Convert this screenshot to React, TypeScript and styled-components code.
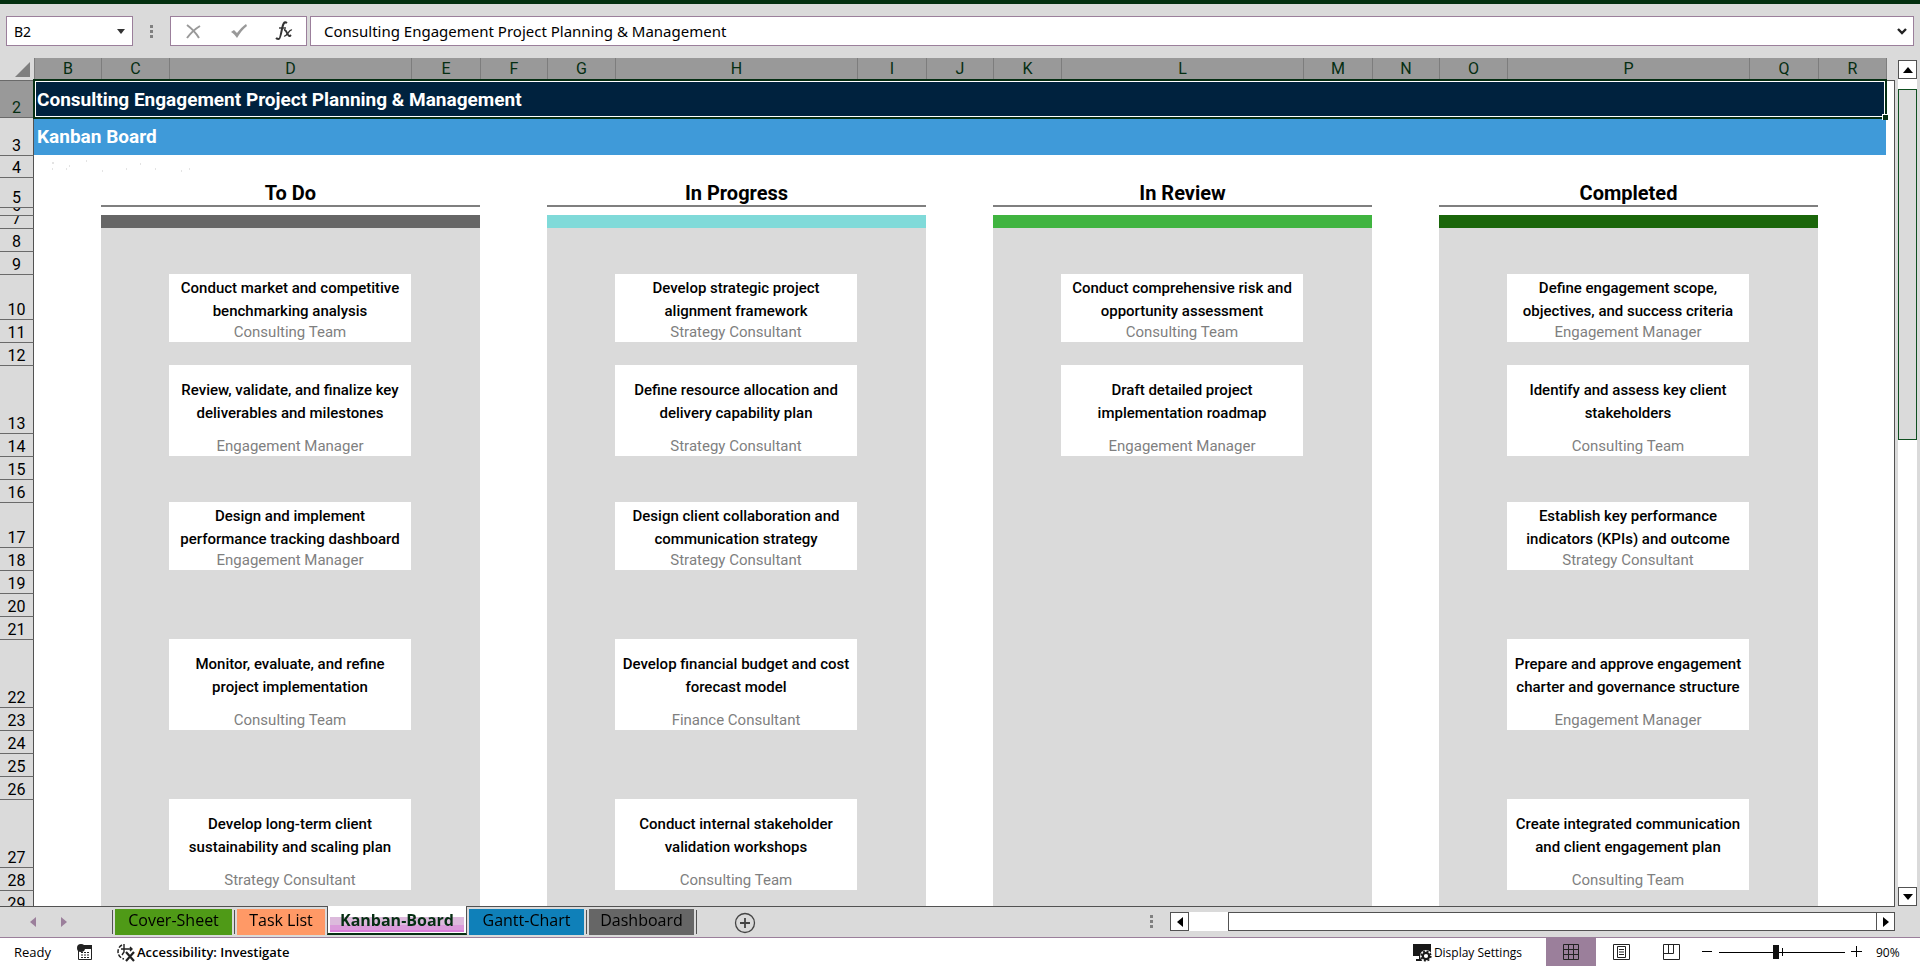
import React from 'react';
import styled, { createGlobalStyle } from 'styled-components';

const ink = '#052e12';
const chrome = '#dadada';
const mauve = '#9b7f9b';
const edge = '#525252';
const uiFont = '"Open Sans", "Noto Sans", sans-serif';
const cellFont = 'Roboto, "Noto Sans", sans-serif';

const GlobalStyle = createGlobalStyle`
  *, *::before, *::after { box-sizing: border-box; }
  body { margin: 0; background: ${chrome}; font-family: ${uiFont}; color: #000; }
  button, input { font: inherit; color: inherit; }
  button { margin: 0; padding: 0; border: 0; background: none; }
`;

const Window = styled.div`
  display: flex;
  flex-direction: column;
  height: 100vh;
  border-top: 4px solid #04300f;
`;

/* Formula bar */
const FormulaBar = styled.div`
  display: flex;
  align-items: center;
  padding: 12px 6px;
`;
const Field = styled.div<{ $grow?: boolean }>`
  display: flex;
  align-items: center;
  flex: ${(p) => (p.$grow ? '1' : '0 0 127px')};
  min-width: 0;
  height: 30px;
  padding: 0 4px 0 ${(p) => (p.$grow ? 13 : 7)}px;
  background: #fff;
  border: 1px solid ${mauve};
`;
const FieldInput = styled.input<{ $size: number }>`
  flex: 1;
  width: 100%;
  min-width: 0;
  padding: 0;
  border: 0;
  outline: 0;
  background: none;
  font-family: "Noto Sans", sans-serif;
  font-size: ${(p) => p.$size}px;
`;
const IconButton = styled.button`
  display: flex;
  align-items: center;
  justify-content: center;
  flex: none;
  width: 14px;
  height: 24px;
`;
const Grip = styled.span`
  display: flex;
  flex-direction: column;
  gap: 2px;
  width: 3px;
  margin: 0 17px;
`;
const GripDot = styled.i`
  height: 3px;
  background: #808080;
`;
const EntryTools = styled.div`
  display: flex;
  align-items: center;
  justify-content: space-around;
  width: 137px;
  height: 30px;
  margin-right: 3px;
  background: #fff;
  border: 1px solid ${mauve};
`;
const ToolButton = styled.button`
  display: flex;
  align-items: center;
  justify-content: center;
  width: 28px;
  height: 28px;
`;

/* Sheet */
const Workspace = styled.div`
  display: flex;
  flex: 1;
  min-height: 0;
`;
const Viewport = styled.div`
  flex: 1;
  min-width: 0;
  overflow: auto;
  scrollbar-width: none;
`;
const Sheet = styled.table`
  width: 100%;
  min-width: 1500px;
  table-layout: fixed;
  border-collapse: separate;
  border-spacing: 0;
  background: #fff;
  font-family: ${cellFont};
  td, th { padding: 0; }
`;
const Col = styled.col<{ $w?: number }>`
  width: ${(p) => (p.$w ? `${p.$w}px` : 'auto')};
`;
const Corner = styled.th`
  height: 22px;
  background: ${chrome};
  text-align: right;
  line-height: 0;
  svg { margin-right: 4px; }
`;
const ColumnHead = styled.th`
  height: 22px;
  background: #999;
  border-left: 1px solid #7d7d7d;
  color: ${ink};
  font-size: 16px;
  font-weight: 400;
  line-height: 22px;
`;
const HeadEnd = styled.th`
  background: ${chrome};
  border-left: 1px solid #7d7d7d;
`;
const RowHead = styled.th<{ $active: boolean }>`
  background: ${(p) => (p.$active ? '#999' : chrome)};
  border-top: 1px solid #6a6a6a;
  border-right: 1px solid ${edge};
  color: ${(p) => (p.$active ? ink : '#000')};
  font-size: 16px;
  font-weight: 400;
`;
const RowNumber = styled.div<{ $h: number }>`
  display: flex;
  align-items: flex-end;
  justify-content: center;
  height: ${(p) => p.$h - 1}px;
  overflow: hidden;
  line-height: 18px;
`;
const SheetEdge = styled.td<{ $first: boolean }>`
  border-right: 1px solid ${edge};
  border-top: ${(p) => (p.$first ? `1px solid ${edge}` : '0')};
`;
const BannerCell = styled.td<{ $bg: string }>`
  position: relative;
  background: ${(p) => p.$bg};
`;
const BannerText = styled.h1`
  margin: 0;
  padding: 2px 0 0 3px;
  color: #fff;
  font-size: 19px;
  font-weight: 700;
  line-height: 24px;
`;
const Selection = styled.span`
  position: absolute;
  z-index: 1;
  inset: -1px -1px -2px -1px;
  border: 2px solid ${ink};
  outline: 1px solid #fff;
  outline-offset: -3px;
  &::after {
    content: '';
    position: absolute;
    right: -3px;
    bottom: -3px;
    width: 6px;
    height: 6px;
    background: ${ink};
    border: solid #fff;
    border-width: 1px 0 0 1px;
  }
`;
const NoteCell = styled.td`
  line-height: 0;
  svg { margin-left: 17px; }
`;
const LaneTitleCell = styled.td`
  padding-top: 4px !important;
  border-bottom: 2px solid #7f7f7f;
  font-size: 20px;
  font-weight: 700;
  line-height: 24px;
  text-align: center;
`;
const LaneCell = styled.td<{ $bg?: string }>`
  background: ${(p) => p.$bg || chrome};
`;
const CardCell = styled.td`
  background: #fff;
  text-align: center;
  font-size: 15px;
`;
const CardTitle = styled.div<{ $h: number }>`
  display: flex;
  align-items: center;
  justify-content: center;
  height: ${(p) => p.$h}px;
  padding: 6px 4px 0;
  font-weight: 500;
  line-height: 23px;
`;
const CardOwner = styled.div`
  display: flex;
  align-items: flex-end;
  justify-content: center;
  height: 23px;
  color: #7f7f7f;
  line-height: 20px;
`;

/* Scroll bars */
const VScroll = styled.div`
  display: flex;
  flex-direction: column;
  width: 25px;
  padding: 2px 3px 0;
`;
const VTrack = styled.div`
  flex: 1;
  padding-top: 10px;
  background: #fff;
`;
const VThumb = styled.div`
  height: 44%;
  background: ${chrome};
  border: 1px solid #0f4f20;
`;
const ScrollButton = styled.button`
  display: flex;
  align-items: center;
  justify-content: center;
  flex: none;
  width: 19px;
  height: 19px;
  background: #fff;
  border: 1px solid ${edge};
`;
const HScroll = styled.div`
  display: flex;
  align-items: center;
  flex: 145;
  height: 19px;
`;
const HTrack = styled.div`
  flex: 1;
  height: 19px;
  padding-left: 39px;
  background: #fff;
`;
const HThumb = styled.div`
  height: 19px;
  border: solid ${edge};
  border-width: 1px 0 1px 1px;
`;

/* Tab strip */
const TabBar = styled.div`
  display: flex;
  align-items: center;
  height: 32px;
  padding-right: 25px;
  border-bottom: 1px solid ${mauve};
  background: linear-gradient(${edge}, ${edge}) 0 0 / calc(100% - 25px) 1px no-repeat;
`;
const TabSide = styled.div`
  display: flex;
  flex: 234;
  align-items: flex-start;
  height: 32px;
`;
const TabNav = styled.div`
  display: flex;
  align-items: center;
  gap: 17px;
  width: 112px;
  height: 32px;
  padding-left: 26px;
`;
const TabGrip = styled.div`
  display: flex;
  align-items: center;
  height: 32px;
`;
const TabList = styled.nav`
  display: flex;
  align-items: flex-start;
`;
const Tab = styled.a<{ $bg: string; $w: number }>`
  width: ${(p) => p.$w}px;
  height: 26px;
  margin: 3px 2px 0;
  background: ${(p) => p.$bg};
  color: #000;
  font-size: 16px;
  line-height: 22px;
  text-align: center;
  text-decoration: none;
`;
const ActiveTab = styled.a`
  width: 140px;
  height: 29px;
  padding: 0 2px;
  background: #fff;
  border: solid ${edge};
  border-width: 0 1px 2px;
  border-bottom-color: ${ink};
  color: ${ink};
  font-size: 16px;
  font-weight: 700;
  text-align: center;
  text-decoration: none;
`;
const ActiveTabLabel = styled.span`
  display: block;
  height: 26px;
  padding-top: 3px;
  line-height: 22px;
  background: linear-gradient(#fff 0 11px, #dcbadc 11px 19px, #da9ada 19px 24px, #d97ed9 24px);
`;
const TabDivider = styled.i`
  width: 1px;
  height: 24px;
  margin-top: 4px;
  background: ${edge};
`;
const AddTab = styled.button`
  width: 22px;
  height: 22px;
  margin: 6px 0 0 37px;
  line-height: 0;
`;

/* Status bar */
const StatusBar = styled.footer`
  display: flex;
  align-items: center;
  height: 28px;
  padding: 0 14px;
  background: #fff;
  font-size: 13px;
  white-space: nowrap;
`;
const StatusButton = styled.button<{ $bold?: boolean }>`
  display: flex;
  align-items: center;
  gap: 2px;
  font-size: ${(p) => (p.$bold ? 13 : 12)}px;
  font-weight: ${(p) => (p.$bold ? 600 : 400)};
`;
const StatusText = styled.span`
  width: 63px;
`;
const MacroButton = styled.button`
  width: 39px;
  text-align: left;
  line-height: 0;
`;
const Spacer = styled.div`
  flex: 1;
`;
const ViewButton = styled.button<{ $on?: boolean }>`
  display: flex;
  align-items: center;
  justify-content: center;
  width: 50px;
  height: 28px;
  background: ${(p) => (p.$on ? mauve : 'transparent')};
`;
const ViewGroup = styled.div`
  display: flex;
  margin: 0 6px 0 24px;
`;
const ZoomGroup = styled.div`
  display: flex;
  align-items: center;
  gap: 6px;
`;
const ZoomSlider = styled.input`
  appearance: none;
  width: 126px;
  height: 16px;
  margin: 0;
  background:
    linear-gradient(#000, #000) 50% 50% / 1px 8px no-repeat,
    linear-gradient(#000, #000) 0 50% / 100% 1px no-repeat;
  &::-webkit-slider-thumb {
    appearance: none;
    width: 6px;
    height: 14px;
    background: #111;
  }
`;
const ZoomValue = styled.span`
  margin-left: 8px;
  width: 30px;
  font-size: 12px;
`;

type Lane = { title: string; color: string; cards: ([string, string] | null)[] };
const lanes: Lane[] = [
  {
    title: 'To Do',
    color: '#666666',
    cards: [
      ['Conduct market and competitive benchmarking analysis', 'Consulting Team'],
      ['Review, validate, and finalize key deliverables and milestones', 'Engagement Manager'],
      ['Design and implement performance tracking dashboard', 'Engagement Manager'],
      ['Monitor, evaluate, and refine project implementation', 'Consulting Team'],
      ['Develop long-term client sustainability and scaling plan', 'Strategy Consultant'],
    ],
  },
  {
    title: 'In Progress',
    color: '#80dad9',
    cards: [
      ['Develop strategic project alignment framework', 'Strategy Consultant'],
      ['Define resource allocation and delivery capability plan', 'Strategy Consultant'],
      ['Design client collaboration and communication strategy', 'Strategy Consultant'],
      ['Develop financial budget and cost forecast model', 'Finance Consultant'],
      ['Conduct internal stakeholder validation workshops', 'Consulting Team'],
    ],
  },
  {
    title: 'In Review',
    color: '#40b440',
    cards: [
      ['Conduct comprehensive risk and opportunity assessment', 'Consulting Team'],
      ['Draft detailed project implementation roadmap', 'Engagement Manager'],
      null,
      null,
      null,
    ],
  },
  {
    title: 'Completed',
    color: '#1a660a',
    cards: [
      ['Define engagement scope, objectives, and success criteria', 'Engagement Manager'],
      ['Identify and assess key client stakeholders', 'Consulting Team'],
      ['Establish key performance indicators (KPIs) and outcome', 'Strategy Consultant'],
      ['Prepare and approve engagement charter and governance structure', 'Engagement Manager'],
      ['Create integrated communication and client engagement plan', 'Consulting Team'],
    ],
  },
];

const columns: [string, number?][] = [
  ['B', 67], ['C', 68], ['D'], ['E', 69], ['F', 67], ['G', 68], ['H'], ['I', 69], ['J', 67],
  ['K', 68], ['L'], ['M', 69], ['N', 67], ['O', 68], ['P'], ['Q', 69], ['R', 68],
];

const rowHeights: Record<number, number> = {
  2: 37, 3: 38, 4: 22, 5: 30, 6: 8, 7: 13, 10: 45, 13: 68, 17: 45, 22: 68, 27: 68,
};
const rowNumbers = Array.from({ length: 28 }, (_, i) => i + 2);
const cardRows = [10, 13, 17, 22, 27];

const Dots = () => (
  <Grip>
    <GripDot />
    <GripDot />
    <GripDot />
  </Grip>
);

const Arrow = ({ d, w = 12, h = 12, fill = '#000' }: { d: string; w?: number; h?: number; fill?: string }) => (
  <svg width={w} height={h} viewBox={`0 0 ${w} ${h}`} aria-hidden="true">
    <path d={d} fill={fill} />
  </svg>
);

function LaneCells({ lane, row, h }: { lane: Lane; row: number; h: number }) {
  if (row === 5) return <LaneTitleCell colSpan={3}>{lane.title}</LaneTitleCell>;
  if (row === 6) return <td colSpan={3} />;
  if (row === 7) return <LaneCell colSpan={3} $bg={lane.color} />;
  const titleIndex = cardRows.indexOf(row);
  const ownerIndex = cardRows.indexOf(row - 1);
  const card = lane.cards[Math.max(titleIndex, ownerIndex)];
  if (!card) return <LaneCell colSpan={3} />;
  return (
    <>
      <LaneCell />
      <CardCell>
        {titleIndex >= 0 ? <CardTitle $h={h}>{card[0]}</CardTitle> : <CardOwner>{card[1]}</CardOwner>}
      </CardCell>
      <LaneCell />
    </>
  );
}

function RowCells({ row, h }: { row: number; h: number }) {
  if (row === 2)
    return (
      <BannerCell colSpan={17} $bg="#00223e">
        <BannerText>Consulting Engagement Project Planning &amp; Management</BannerText>
        <Selection />
      </BannerCell>
    );
  if (row === 3)
    return (
      <BannerCell colSpan={17} $bg="#3f9ad9">
        <BannerText as="h2">Kanban Board</BannerText>
      </BannerCell>
    );
  if (row === 4)
    return (
      <NoteCell colSpan={17}>
        <svg width="142" height="12" viewBox="0 0 142 12" aria-hidden="true">
          <path
            d="M1 3h2M1 9h1M15 9h1M18 6h1M35 1h1M51 11h1M75 9h1M89 4h1M104 9h1M130 11h1M138 9h1"
            stroke="#c9c9c9"
          />
        </svg>
      </NoteCell>
    );
  return (
    <>
      {lanes.map((lane) => (
        <React.Fragment key={lane.title}>
          <td />
          <LaneCells lane={lane} row={row} h={h} />
        </React.Fragment>
      ))}
      <td />
    </>
  );
}

export default function App() {
  return (
    <Window>
      <GlobalStyle />
      <FormulaBar>
        <Field>
          <FieldInput $size={14} aria-label="Name box" defaultValue="B2" />
          <IconButton aria-label="Names">
            <Arrow w={8} h={5} d="M0 0h8L4 5z" fill="#333" />
          </IconButton>
        </Field>
        <Dots />
        <EntryTools>
          <ToolButton aria-label="Cancel">
            <svg width="17" height="17" viewBox="0 0 17 17" fill="none" stroke="#999" strokeWidth="2">
              <path d="M2 2C6 5 11 10 14 15M15 3C10 6 5 11 2 15" />
            </svg>
          </ToolButton>
          <ToolButton aria-label="Enter">
            <svg width="18" height="16" viewBox="0 0 18 16" fill="#999">
              <path d="M1 9l3-2 3 3C10 6 13 3 16 1l1 2C13 6 10 10 7 15 5 12 3 10 1 9z" />
            </svg>
          </ToolButton>
          <ToolButton aria-label="Insert function">
            <svg width="18" height="20" viewBox="0 0 18 20" fill="none" stroke="#333">
              <path d="M12 2C9 0 8 3 7 8S5 18 4 18 2 18 1 17" strokeWidth="2" />
              <path d="M4 7h7" strokeWidth="1.4" />
              <path d="M9 9c3-1 3 7 6 6l1-1" strokeWidth="1.9" />
              <path d="M17 9c-3-1-5 7-8 6" strokeWidth="1.3" />
            </svg>
          </ToolButton>
        </EntryTools>
        <Field $grow>
          <FieldInput
            $size={15}
            aria-label="Formula"
            defaultValue="Consulting Engagement Project Planning & Management"
          />
          <IconButton aria-label="Expand formula bar">
            <svg width="10" height="7" viewBox="0 0 10 7" fill="none" stroke="#222" strokeWidth="2.4">
              <path d="M1 1l4 4 4-4" />
            </svg>
          </IconButton>
        </Field>
      </FormulaBar>

      <Workspace>
        <Viewport>
          <Sheet>
            <colgroup>
              <Col $w={34} />
              {columns.map(([name, w]) => (
                <Col key={name} $w={w} />
              ))}
              <Col $w={9} />
            </colgroup>
            <thead>
              <tr>
                <Corner aria-label="Select all">
                  <Arrow w={15} h={15} d="M15 0v15H0z" fill="#7f7f7f" />
                </Corner>
                {columns.map(([name]) => (
                  <ColumnHead key={name} scope="col">
                    {name}
                  </ColumnHead>
                ))}
                <HeadEnd />
              </tr>
            </thead>
            <tbody>
              {rowNumbers.map((row) => {
                const h = rowHeights[row] ?? 23;
                return (
                  <tr key={row}>
                    <RowHead scope="row" $active={row === 2}>
                      <RowNumber $h={h}>{row}</RowNumber>
                    </RowHead>
                    <RowCells row={row} h={h} />
                    <SheetEdge $first={row === 2} />
                  </tr>
                );
              })}
            </tbody>
          </Sheet>
        </Viewport>
        <VScroll>
          <ScrollButton aria-label="Scroll up">
            <Arrow w={10} h={6} d="M5 0l5 6H0z" />
          </ScrollButton>
          <VTrack>
            <VThumb />
          </VTrack>
          <ScrollButton aria-label="Scroll down">
            <Arrow w={10} h={6} d="M0 0h10L5 6z" />
          </ScrollButton>
        </VScroll>
      </Workspace>

      <TabBar>
        <TabSide>
          <TabNav>
            <IconButton aria-label="Previous sheet">
              <Arrow w={6} h={10} d="M6 0v10L0 5z" fill={mauve} />
            </IconButton>
            <IconButton aria-label="Next sheet">
              <Arrow w={6} h={10} d="M0 0v10l6-5z" fill={mauve} />
            </IconButton>
          </TabNav>
          <TabList aria-label="Sheets">
            <TabDivider />
            <Tab href="#cover" $bg="#4f9a17" $w={117}>Cover-Sheet</Tab>
            <TabDivider />
            <Tab href="#tasks" $bg="#ff9966" $w={88}>Task List</Tab>
            <ActiveTab href="#kanban" aria-current="page">
              <ActiveTabLabel>Kanban-Board</ActiveTabLabel>
            </ActiveTab>
            <Tab href="#gantt" $bg="#0f80b9" $w={115}>Gantt-Chart</Tab>
            <TabDivider />
            <Tab href="#dashboard" $bg="#666666" $w={105}>Dashboard</Tab>
            <TabDivider />
          </TabList>
          <AddTab aria-label="New sheet">
            <svg width="22" height="22" viewBox="0 0 22 22" fill="none" stroke="#444">
              <circle cx="11" cy="11" r="9.5" strokeWidth="1.3" />
              <path d="M11 6v10M6 11h10" strokeWidth="1.8" />
            </svg>
          </AddTab>
          <Spacer />
          <TabGrip>
            <Dots />
          </TabGrip>
        </TabSide>
        <HScroll>
          <ScrollButton aria-label="Scroll left">
            <Arrow w={6} h={10} d="M6 0v10L0 5z" />
          </ScrollButton>
          <HTrack>
            <HThumb />
          </HTrack>
          <ScrollButton aria-label="Scroll right">
            <Arrow w={6} h={10} d="M0 0v10l6-5z" />
          </ScrollButton>
        </HScroll>
      </TabBar>

      <StatusBar>
        <StatusText>Ready</StatusText>
        <MacroButton aria-label="Record macro">
          <svg width="16" height="17" viewBox="0 0 16 17">
            <path d="M1.5 5v10.5h13V2H5" fill="none" stroke="#222" />
            <path d="M6 1h9v4H6z" fill="#222" />
            <circle cx="4" cy="4" r="4" fill="#222" />
            <path d="M4 8.500h2M7 8.500h2M10 8.500h2M4 11h2M7 11h2M10 11h2M4 13.500h2M7 13.500h2M10 13.500h2" stroke="#222" />
          </svg>
        </MacroButton>
        <StatusButton $bold>
          <svg width="19" height="19" viewBox="0 0 19 19" fill="none" stroke="#222">
            <path d="M6 2a7.500 7.500 0 0 0 2 14" strokeWidth="1.5" strokeDasharray="4 1.500" />
            <path d="M8 1v5M5 6h11M14 4l2 2-2 2M8 6v3l-2 3" strokeWidth="1.4" />
            <path d="M10 9l8 9M18 9l-8 9" strokeWidth="2.200" />
          </svg>
          Accessibility: Investigate
        </StatusButton>
        <Spacer />
        <StatusButton>
          <svg width="19" height="19" viewBox="0 0 19 19">
            <path d="M0 1h18v12H0zM6 13h3v3h2v2H3v-2h3z" fill="#181818" />
            <circle cx="13" cy="13" r="6" fill="#fff" />
            <circle cx="13" cy="13" r="3.200" fill="none" stroke="#181818" strokeWidth="2.200" />
            <circle cx="13" cy="13" r="4.800" fill="none" stroke="#181818" strokeWidth="1.600" strokeDasharray="2 1.770" />
          </svg>
          Display Settings
        </StatusButton>
        <ViewGroup>
          <ViewButton $on aria-label="Normal view">
            <svg width="16" height="16" viewBox="0 0 16 16" fill="none" stroke="#222">
              <path d="M.5 .5h15v15H.5zM5.500 0v16M10.500 0v16M0 5.500h16M0 10.500h16" />
            </svg>
          </ViewButton>
          <ViewButton aria-label="Page layout view">
            <svg width="17" height="16" viewBox="0 0 17 16" fill="none" stroke="#222">
              <path d="M.5 .5h16v15H.5zM4.500 2.500h8v11h-8zM6 5.500h5M6 8h5M6 10.500h5" />
            </svg>
          </ViewButton>
          <ViewButton aria-label="Page break preview">
            <svg width="17" height="16" viewBox="0 0 17 16" fill="none" stroke="#222">
              <path d="M.5 .5h16v15H.5zM.5 9.500h10v-9M5.500 .5v9" />
            </svg>
          </ViewButton>
        </ViewGroup>
        <ZoomGroup>
          <button aria-label="Zoom out">
            <svg width="11" height="11" viewBox="0 0 11 11" stroke="#000">
              <path d="M0 5.500h10" />
            </svg>
          </button>
          <ZoomSlider type="range" min={0} max={100} defaultValue={45} aria-label="Zoom" />
          <button aria-label="Zoom in">
            <svg width="11" height="11" viewBox="0 0 11 11" stroke="#000">
              <path d="M0 5.500h11M5.500 0v11" />
            </svg>
          </button>
          <ZoomValue>90%</ZoomValue>
        </ZoomGroup>
      </StatusBar>
    </Window>
  );
}
